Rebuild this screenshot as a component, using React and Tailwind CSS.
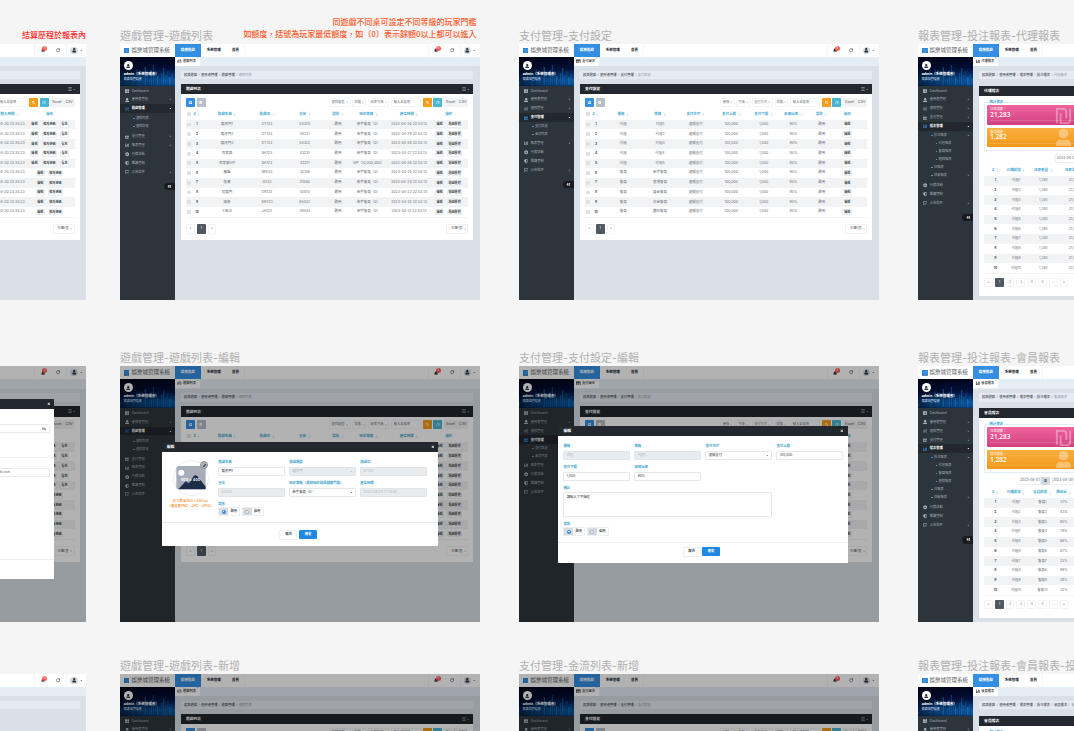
import React from "react";
import { FaBell, FaUser, FaChartBar, FaSearch, FaTrashAlt, FaCaretRight, FaCaretDown, FaThLarge, FaUserAlt, FaCog, FaShieldAlt, FaPlusSquare, FaAngleDoubleLeft, FaBars, FaSort, FaPen, FaTimes, FaRegCreditCard, FaEyeSlash, FaCalendarAlt, FaRegEnvelope } from "react-icons/fa";
import { RotateCw, Gamepad2 } from "lucide-react";

const TABLES = {
  game: {
    grid: "grid-cols-[6.5px_9px_51px_29px_46.5px_20px_41px_40px_39.3px]",
    heads: ["遊戲名稱", "遊戲ID", "桌台", "狀態", "玩家等級", "建立時間", "操作"],
    rows: [
      ["龍虎門1", "DT123", "54320", "啟用", "新手會員（0）", "2023-04-30 22:53:13"],
      ["龍虎門2", "DT123", "54321", "啟用", "新手會員（0）", "2023-04-29 22:53:13"],
      ["龍虎門3", "DT123", "54322", "啟用", "新手會員（0）", "2023-04-28 22:53:13"],
      ["百家樂", "BA123", "43210", "啟用", "新手會員（0）", "2023-04-27 22:53:13"],
      ["百家樂VIP", "BA123", "43211", "啟用", "VIP（10,000,000）", "2023-04-26 22:53:13"],
      ["輪盤", "NN123", "32109", "啟用", "新手會員（0）", "2023-04-25 22:53:13"],
      ["骰寶", "SI123", "21080", "啟用", "新手會員（0）", "2023-04-24 22:53:13"],
      ["射龍門", "DR123", "10870", "啟用", "新手會員（0）", "2023-04-23 22:53:13"],
      ["麻將", "MA123", "65432", "啟用", "新手會員（0）", "2023-04-22 22:53:13"],
      ["十點半", "JA123", "76543", "啟用", "新手會員（0）", "2023-04-21 22:53:13"],
    ],
    actions: () => ["編輯", "遊戲歷程"],
    filters: [["遊戲類型", "w-[22px]"], ["狀態", "w-[14px]"], ["玩家等級", "w-[21.3px]"]],
  },
  pay: {
    grid: "grid-cols-[6.5px_9px_11.5px_22.6px_50.8px_20.6px_50.6px_14.2px_45px_11.8px_39.4px]",
    gap: true,
    heads: ["層級", "等級", "支付方式", "支付上限", "支付下限", "反佣比率", "狀態", "操作"],
    rows: [
      ["代理", "代理1"], ["代理", "代理2"], ["代理", "代理3"], ["代理", "代理4"], ["代理", "代理5"],
      ["會員", "新手會員"], ["會員", "普通會員"], ["會員", "黃金會員"], ["會員", "白金會員"], ["會員", "鑽石會員"],
    ].map((r) => [...r, "虛擬支付", "100,000", "1,000", "95%", "啟用"]),
    actions: () => ["編輯"],
    filters: [["層級", "w-[14.3px]"], ["等級", "w-[13.5px]"], ["支付方式", "w-[21.3px]"], ["狀態", "w-[13.8px]"]],
  },
  account: {
    grid: "grid-cols-[6.5px_9px_51px_29px_46.5px_20px_34px_36px_50.3px]",
    heads: ["帳號", "名稱", "層級", "狀態", "登入IP", "最後登入時間", "操作"],
    rows: Array.from({ length: 10 }, (_, i) => ["agent" + (i + 1), "代理" + (i + 1), "代理", "啟用", "", "2023-04-30 23:35:23"]),
    actions: (i) => (i < 5 ? ["編輯", "修改密碼", "信息"] : ["編輯", "修改密碼"]),
    filters: [["層級", "w-[14.3px]"], ["狀態", "w-[14px]"]],
  },
};

const REPORTS = {
  agent: {
    grid: "grid-cols-[22.6px_18.8px_35.8px_25.6px_40px]",
    heads: ["#", "代理帳號", "注單數量", "注單金額", "輸贏"],
    row: (i) => [i, "代理" + i, "1,280", "21,000", "1,200"],
    offset: "pl-[71.3px]",
  },
  member: {
    grid: "grid-cols-[22.6px_18.8px_33.8px_9px_40px]",
    heads: ["#", "代理帳號", "會員帳號", "勝出比", "輸贏"],
    row: (i) => [i, "代理" + i, "會員" + i, ["57%", "43%", "80%", "79%", "86%", "67%", "23%", "69%", "29%", "33%"][i - 1], "1,200"],
    offset: "pl-[34.8px]",
  },
};

function Avatar({ className }) {
  return (
    <span className={"flex shrink-0 items-center justify-center overflow-hidden rounded-full " + className}>
      <FaUser className="size-[4.5px]" />
    </span>
  );
}

function TopBar() {
  return (
    <div className="flex h-[12.5px] shrink-0 items-center bg-white">
      <div className="flex h-full w-[55px] items-center gap-[2px] pl-[4px]">
        <svg viewBox="0 0 20 20" className="size-[5.8px] shrink-0">
          <rect width="20" height="20" rx="2" fill="#1c5f9f" />
          <path d="M1 1h18v12q-9 8-18 2z" fill="#3793e8" />
        </svg>
        <span className="whitespace-nowrap text-[5.5px] leading-none text-[#5a5e63]">娛樂城管理系統</span>
      </div>
      <div className="flex h-full w-[26px] items-center justify-center bg-[#348fe2] text-[3.5px] font-bold text-white">娛樂遊戲</div>
      <div className="flex h-full w-[26px] items-center justify-center text-[3.5px] font-bold text-[#22272c]">系統管理</div>
      <div className="flex h-full w-[18.5px] items-center justify-center border-r border-[#f6f7f9] text-[3.5px] font-bold text-[#22272c]">首頁</div>
      <div className="flex-1" />
      <div className="flex h-full w-[16px] items-center justify-center border-l border-[#f3f5f7]">
        <div className="relative">
          <FaBell className="size-[4.2px] text-[#2d353c]" />
          <span className="absolute -top-[2.4px] left-[1.7px] flex size-[4.6px] items-center justify-center rounded-full bg-[#ff5b57] text-[3px] leading-none text-white">5</span>
        </div>
      </div>
      <div className="flex h-full w-[15.8px] items-center justify-center text-[#3d454c]">
        <RotateCw strokeWidth={2.8} className="size-[4.4px]" />
      </div>
      <div className="flex h-full w-[20px] items-center gap-[1.8px] border-l border-[#f3f5f7] pl-[3.2px] text-[#2d353c]">
        <Avatar className="size-[7.6px] bg-[#d3dbe3]" />
        <FaCaretDown className="size-[2.6px]" />
      </div>
    </div>
  );
}

const BARS = [4, 6, 3, 7, 12, 9, 5, 11, 16, 13, 8, 10, 18, 12, 7, 15, 20, 14, 9, 6, 12, 17, 10, 14, 8, 11, 6];

function Profile() {
  return (
    <div className="relative h-[29.2px] shrink-0 overflow-hidden bg-[#020817]">
      <svg viewBox="0 0 55 29.2" preserveAspectRatio="none" className="absolute inset-0 h-full w-full">
        <defs>
          <linearGradient id="glow" x1="0" y1="0" x2="0" y2="1">
            <stop offset="0" stopColor="#02051c" />
            <stop offset="0.4" stopColor="#03103a" />
            <stop offset="0.8" stopColor="#0a4f96" />
            <stop offset="1" stopColor="#063a78" />
          </linearGradient>
          <linearGradient id="shade" x1="0" y1="0" x2="1" y2="0">
            <stop offset="0" stopColor="#00030f" stopOpacity="0.6" />
            <stop offset="0.5" stopColor="#00030f" stopOpacity="0.2" />
            <stop offset="1" stopColor="#00030f" stopOpacity="0" />
          </linearGradient>
        </defs>
        <rect width="55" height="29.2" fill="url(#glow)" />
        {BARS.map((h, i) => (
          <rect key={i} x={i * 2.05} y={28 - h} width="1.3" height={h} fill={i % 3 ? "#1670c0" : "#2ba0df"} opacity={i % 2 ? 0.35 : 0.5} />
        ))}
        <rect width="55" height="29.2" fill="url(#shade)" />
      </svg>
      <div className="relative flex flex-col pl-[4px] pt-[4.6px] text-white">
        <Avatar className="size-[9px] bg-white text-[#2d353c]" />
        <span className="mt-[1.8px] whitespace-nowrap text-[3.5px] font-bold leading-[4.5px]">admin（系統管理者）</span>
        <span className="whitespace-nowrap text-[3px] font-medium leading-[4.6px] text-[#bcd3ea]">娛樂城管理者</span>
      </div>
    </div>
  );
}

const MENU = [
  { id: "dash", label: "Dashboard", Icon: FaThLarge },
  { id: "user", label: "使用者管理", Icon: FaUserAlt, more: true },
  { id: "game", label: "遊戲管理", Icon: Gamepad2, more: true },
  { id: "pay", label: "支付管理", Icon: FaRegCreditCard, more: true },
  { id: "report", label: "報表管理", Icon: FaChartBar, more: true },
  { id: "promo", label: "行銷活動", Icon: FaCog },
  { id: "guard", label: "維護管制", Icon: FaShieldAlt },
  { id: "mail", label: "公告信件", Icon: FaRegEnvelope, more: true },
];

const SUBS = {
  game: { pad: "pt-[1.5px] pb-[1.3px]", items: [["遊戲列表", 0], ["遊戲設定", 0]] },
  pay: { pad: "pb-[0.6px]", items: [["支付設定", 0], ["金流列表", 0]] },
  user: { pad: "pb-[0.6px]", items: [["代理管理", 0], ["會員管理", 0]] },
  report: { pad: "pb-[1.3px]", items: [["投注報表", 0, true], ["代理報表", 1], ["會員報表", 1], ["遊戲報表", 1], ["日報表", 0], ["活動報表", 0, true]] },
};

function Sidebar({ active }) {
  return (
    <div className="flex w-[55px] shrink-0 flex-col bg-[#2d353c] text-[3.25px] text-[#a3abb2]">
      <Profile />
      <div className="pt-[0.6px]">
        {MENU.map(({ id, label, Icon, more }) => (
          <React.Fragment key={id}>
            <div className={"flex h-[8.95px] items-center pl-[5px] pr-[2.6px] " + (id === active ? "bg-[#22282e] font-bold text-white" : "")}>
              <Icon className={"size-[4.4px] shrink-0 " + (id === active ? "text-[#348fe2]" : "text-[#a9b1b8]")} />
              <span className="ml-[2.6px] flex-1 whitespace-nowrap">{label}</span>
              {more && (id === active ? <FaCaretDown className="size-[2.8px]" /> : <FaCaretRight className="size-[2.8px]" />)}
            </div>
            {id === active && (
              <div className={SUBS[id].pad}>
                {SUBS[id].items.map(([name, depth, open], i) => (
                  <div key={name} className={"flex h-[8.1px] items-center pr-[2.6px] " + (depth ? "pl-[18px]" : "pl-[13.5px]")}>
                    <span className={"mr-[1.3px] h-px w-[1.4px] " + (i === 0 ? "bg-[#348fe2]" : "bg-[#7f8a94]")} />
                    <span className="flex-1 whitespace-nowrap">{name}</span>
                    {open && (i === 0 ? <FaCaretDown className="size-[2.8px]" /> : <FaCaretRight className="size-[2.8px]" />)}
                  </div>
                ))}
              </div>
            )}
          </React.Fragment>
        ))}
      </div>
      <div className="mt-[6.2px] flex h-[7.3px] w-[10.6px] items-center self-end rounded-l-full bg-[#171b1f] pl-[3.4px] text-white">
        <FaAngleDoubleLeft className="size-[4.8px]" />
      </div>
    </div>
  );
}

function Pager({ pages }) {
  return (
    <div className="flex gap-[2px] text-[3.25px] text-[#6f7a85]">
      {["«", ...pages, "»"].map((p, i) => (
        <span key={i} className={"flex h-[9.3px] w-[8.8px] items-center justify-center rounded-[1px] " + (i === 1 ? "bg-[#505962] text-white" : "border border-[#f1f3f5] bg-white")}>{p}</span>
      ))}
    </div>
  );
}

function Head({ text, sort }) {
  return (
    <span className="flex items-center justify-center gap-[1.6px] whitespace-nowrap">
      {text}
      {sort && <FaSort className="size-[3px] shrink-0 text-[#c8d0d8]" />}
    </span>
  );
}

const Check = () => <span className="flex justify-center"><i className="size-[3.8px] rounded-[0.8px] bg-[#dee2e6]" /></span>;

function ListBody({ table }) {
  const t = TABLES[table];
  return (
    <div className="flex flex-col px-[5px] pb-[6.6px] pt-[3.3px]">
      <div className="flex h-[9.5px] gap-[1.7px] text-[3.25px]">
        <span className="flex w-[9px] items-center justify-center rounded-[0.7px] bg-[#348fe2] text-white"><FaPlusSquare className="size-[3.6px]" /></span>
        <span className="flex w-[9px] items-center justify-center rounded-[0.7px] bg-[#b6bec7] text-white"><FaTrashAlt className="size-[3.4px]" /></span>
        <span className="flex-1" />
        {t.filters.map(([f, w]) => (
          <span key={f} className={"flex items-center justify-center gap-[1px] whitespace-nowrap rounded-[1px] border border-[#f2f4f6] text-[#6c757d] " + w}>
            {f}<FaCaretDown className="size-[2.2px]" />
          </span>
        ))}
        <span className="flex w-[30.2px] items-center whitespace-nowrap rounded-[1px] border border-[#f2f4f6] pl-[1.6px] text-[#6c757d]">輸入並搜尋</span>
        <span className="flex w-[8.8px] items-center justify-center rounded-[0.7px] bg-[#f59c1a] text-white"><FaSearch className="size-[3px]" /></span>
        <span className="flex w-[9px] items-center justify-center rounded-[0.7px] bg-[#49b6d6] text-white"><RotateCw strokeWidth={3} className="size-[3.6px]" /></span>
        <span className="flex w-[24.3px] items-center justify-around rounded-[0.7px] bg-[#f2f3f4] text-[3.5px] text-[#4b5157]"><b className="font-normal">Excel</b><b className="font-normal">CSV</b></span>
      </div>
      <div className={"mt-[1.5px] grid h-[11px] items-center text-center text-[3.5px] font-bold text-[#4aabd2] " + t.grid}>
        <Check />
        <Head text="#" sort />
        {t.gap && <span />}
        {t.heads.map((h, i) => <Head key={h} text={h} sort={i < t.heads.length - 1} />)}
      </div>
      {t.rows.map((r, i) => (
        <div key={i} className={"grid h-[9.73px] items-center text-center text-[3.5px] text-[#6a7077] " + t.grid + (i % 2 ? "" : " bg-[#f2f3f5]")}>
          <Check />
          <b className="text-[3.25px] text-[#4b5157]">{i + 1}</b>
          {t.gap && <span />}
          {r.map((c, k) => <span key={k} className="flex justify-center whitespace-nowrap">{c}</span>)}
          <span className="flex items-center justify-center gap-[2.4px]">
            {t.actions(i).map((a) => (
              <b key={a} className="flex h-[6.6px] shrink-0 items-center whitespace-nowrap rounded-[1px] border border-[#eceff1] bg-white px-[0.7px] text-[3.1px] text-[#40464c]">{a}</b>
            ))}
          </span>
        </div>
      ))}
      <div className="flex justify-between border-t border-[#f1f3f5] pt-[6.4px]">
        <Pager pages={["1"]} />
        <span className="flex h-[9.3px] w-[22px] items-center justify-end gap-[1.2px] whitespace-nowrap rounded-[1px] border border-[#f0f2f4] pr-[1.6px] text-[3.4px] text-[#5d646b]">10筆/頁<FaCaretDown className="size-[2.2px]" /></span>
      </div>
    </div>
  );
}

function Stat({ label, value, className, children }) {
  return (
    <div className={"relative flex h-[19.7px] w-[92px] flex-col overflow-hidden rounded-[1px] pl-[3px] pt-[2.4px] text-white " + className}>
      <span className="text-[3.2px] font-medium leading-[4.4px] text-white/85">{label}</span>
      <span className="font-['Open_Sans',sans-serif] text-[6.4px] font-semibold leading-[6.8px]">{value}</span>
      <svg viewBox="0 0 20 20" className="absolute bottom-0 right-[6px] size-[19px] text-white/35">{children}</svg>
      <span className="mt-[1.6px] h-px w-[84px] bg-white/15" />
    </div>
  );
}

function ReportBody({ kind }) {
  const r = REPORTS[kind];
  return (
    <div className="flex flex-col px-[5px] pb-[9px] pt-[3.8px]">
      <fieldset className="flex flex-col rounded-[1px] border border-[#e4ecf3] px-[2.2px] pb-[2.8px]">
        <legend className="ml-[1.5px] h-[5px] px-[0.6px] text-[3.4px] font-bold leading-[5px] text-[#3fa5cf]">統計資訊</legend>
        <Stat label="注單總數：" value="21,283" className="bg-linear-to-b from-[#f0649e] to-[#d23f80]">
          <path d="M3 18V3h7q3 0 3 3v7M7 8v10h7q3 0 3-3V3" fill="none" stroke="currentColor" strokeWidth="2" />
        </Stat>
        <div className="h-[3px]" />
        <Stat label="投注總量：" value="1,282" className="bg-linear-to-b from-[#fab040] to-[#f29716]">
          <circle cx="10" cy="6" r="5" fill="currentColor" />
          <path d="M2 19q0-7 5-7 3 2 6 0 5 0 5 7z" fill="currentColor" />
        </Stat>
      </fieldset>
      <div className={"mt-[3.4px] flex h-[8.6px] text-[3.4px] text-[#555c63] " + r.offset}>
        <span className="flex w-[22px] items-center justify-center whitespace-nowrap rounded-[1px] border border-[#edeff1]">2023-04-01</span>
        <span className="flex w-[9px] items-center justify-center bg-[#d2dae2] text-[#4b5157]"><FaCalendarAlt className="size-[3px]" /></span>
        <span className="ml-[2px] flex w-[22px] items-center justify-center whitespace-nowrap rounded-[1px] border border-[#edeff1]">2023-04-30</span>
      </div>
      <div className={"mt-[2.8px] grid h-[10px] items-center text-[3.5px] font-bold text-[#4aabd2] " + r.grid}>
        {r.heads.map((h) => <Head key={h} text={h} sort />)}
      </div>
      {Array.from({ length: 10 }, (_, i) => (
        <div key={i} className={"grid h-[9.73px] items-center text-center text-[3.4px] text-[#6a7077] " + r.grid + (i % 2 ? "" : " bg-[#f2f3f5]")}>
          {r.row(i + 1).map((c, k) => <span key={k} className={"flex justify-center whitespace-nowrap " + (k ? "" : "font-bold text-[#4b5157]")}>{c}</span>)}
        </div>
      ))}
      <div className="flex border-t border-[#f1f3f5] pt-[3.6px]">
        <Pager pages={["1", "2", "3", "4", "5", "..."]} />
      </div>
    </div>
  );
}

function Frame({ className, active, title, crumbs, TabIcon, table, report, dim, children }) {
  return (
    <div className={"absolute flex h-[256px] w-[360px] flex-col overflow-hidden bg-[#d9e0e7] " + className}>
      <TopBar />
      <div className="flex min-h-0 flex-1">
        <Sidebar active={active} />
        <div className="min-w-0 flex-1">
          <div className="h-[9.7px] bg-[#e5edf5]">
            <div className="flex h-[9.2px] w-[25.2px] items-center gap-[1px] bg-white pl-[2.8px] text-[3.25px] font-medium text-[#22272c]">
              <TabIcon className="size-[4.6px] shrink-0" />
              <span className="whitespace-nowrap">{title}</span>
              <FaTimes className="mb-[6px] size-[1.6px] shrink-0 text-[#666]" />
            </div>
          </div>
          <div className="px-[6.3px] pt-[4.6px]">
            <div className="flex h-[8.5px] items-center gap-[1.4px] whitespace-nowrap rounded-[1px] bg-[#e6eaf3] pl-[2.9px] text-[3.3px] font-medium text-[#4b5157]">
              {crumbs.map((c) => <React.Fragment key={c}><span>{c}</span><span className="text-[#8a939b]">/</span></React.Fragment>)}
              <span className="font-normal text-[#9299a1]">{title}</span>
            </div>
            {(table || report) && (
              <div className={"bg-white " + (report ? "mt-[6.4px]" : "mt-[4.7px]")}>
                <div className="flex h-[10.2px] items-center justify-between bg-[#22282e] pl-[5px] pr-[4px] text-white">
                  <span className="text-[3.8px] font-bold">{title}</span>
                  {!report && <span className="flex items-center gap-[1px] text-[#b5bbc0]"><FaBars className="size-[4px]" /><FaCaretDown className="size-[2.6px]" /></span>}
                </div>
                {report ? <ReportBody kind={report} /> : <ListBody table={table} />}
              </div>
            )}
          </div>
        </div>
      </div>
      {dim && <div className="absolute inset-0 bg-black/30" />}
      {children}
    </div>
  );
}

function Modal({ className, title, children }) {
  return (
    <div className={"absolute flex flex-col bg-white " + className}>
      <div className="flex h-[10.2px] shrink-0 items-center justify-between bg-[#22282e] pl-[5px] pr-[3.6px] text-white">
        <span className="text-[3.8px] font-bold">{title}</span>
        <FaTimes className="size-[3.6px]" />
      </div>
      {children}
    </div>
  );
}

function Field({ label, value, off, select }) {
  return (
    <div className="w-[66.5px]">
      <div className="h-[6.7px] whitespace-nowrap text-[3.4px] font-bold leading-[5px] text-[#3fa5cf]">{label}</div>
      <div className={"flex h-[9px] items-center justify-between whitespace-nowrap rounded-[1px] border px-[2.4px] text-[3.3px] " + (off ? "border-[#e1e5e9] bg-[#e9ecef] text-[#adb5bd]" : "border-[#e4e8eb] bg-white text-[#343a40]")}>
        {value}
        {select && <FaCaretDown className="size-[2.6px]" />}
      </div>
    </div>
  );
}

function Radios() {
  return (
    <div>
      <div className="h-[5.2px] text-[3.4px] font-bold leading-[4px] text-[#3fa5cf]">狀態</div>
      <div className="flex gap-[1.4px] text-[3.3px] font-medium text-[#343a40]">
        {["啟用", "停用"].map((t, i) => (
          <div key={t} className="flex h-[9px] w-[22px] items-center border border-[#edf0f2]">
            <span className="flex h-full w-[9px] items-center justify-center bg-[#d5dbe1]">
              <i className={"flex size-[4px] items-center justify-center rounded-full " + (i ? "border border-[#aab2ba] bg-white" : "bg-[#348fe2]")}>
                {!i && <i className="size-[1.4px] rounded-full bg-white" />}
              </i>
            </span>
            <span className="flex-1 text-center">{t}</span>
          </div>
        ))}
      </div>
    </div>
  );
}

function Footer({ className }) {
  return (
    <div className={"flex flex-1 items-center justify-center gap-[1.6px] border-t border-[#e9ecef] text-[3.3px] font-bold " + className}>
      <span className="flex h-[9.4px] w-[18px] items-center justify-center rounded-[1px] border border-[#eceef0] text-[#343a40]">取消</span>
      <span className="flex h-[9px] w-[17.8px] items-center justify-center rounded-[1px] bg-[#1f88e5] text-white">確定</span>
    </div>
  );
}

function GameModal() {
  return (
    <Modal title="編輯" className="left-[42px] top-[75.7px] h-[104.3px] w-[276px]">
      <div className="flex h-[70.2px] shrink-0 pt-[7.6px]">
        <div className="flex w-[56.5px] shrink-0 flex-col items-center">
          <div className="relative ml-[1.4px]">
            <svg viewBox="0 0 108 108" className="size-[36px]">
              <circle cx="54" cy="54" r="52" fill="#fff" stroke="#dfe2e6" strokeWidth="2" />
              <rect x="10" y="18" width="88" height="70" rx="8" fill="#a6acba" />
              <circle cx="25" cy="38" r="9" fill="#fff" />
              <path d="M16 88 38 64 48 70 62 48Q70 42 76 52L98 80V88z" fill="#1e2d48" />
            </svg>
            <span className="absolute inset-x-0 top-[17px] whitespace-nowrap text-center text-[3.8px] font-semibold leading-[5px] text-white">900 x 400</span>
            <span className="absolute right-[0.5px] top-[1.6px] flex size-[8px] items-center justify-center rounded-full border border-[#8c949c] bg-[#a9b0b7] text-[#343a40]"><FaPen className="size-[3.2px]" /></span>
          </div>
          <div className="ml-[1px] mt-[3.6px] whitespace-nowrap text-center text-[3.4px] font-medium leading-[4.8px] text-[#f58a1a]">
            尺寸限定900 x 400 px<br />（僅支援PNG、JPG、JPEG）
          </div>
        </div>
        <div className="flex w-[213px] shrink-0 flex-wrap content-start gap-x-[4.5px] gap-y-[5.3px]">
          <Field label="遊戲名稱" value="龍虎門1" />
          <Field label="遊戲類型" value="龍虎門" off select />
          <Field label="遊戲ID" value="DT123" off />
          <Field label="桌台" value="54320" off />
          <Field label="玩家等級（限制玩家最低額度門檻）" value="新手會員（0）" select />
          <Field label="建立時間" value="2023-04-24 17:53:08" off />
          <Radios />
        </div>
      </div>
      <Footer className="pr-[3px]" />
    </Modal>
  );
}

function PayModal() {
  return (
    <Modal title="編輯" className="left-[39.7px] top-[59.7px] h-[137px] w-[289.3px]">
      <div className="flex h-[106.1px] shrink-0 flex-wrap content-start gap-x-[4.5px] gap-y-[5.3px] pl-[5px] pt-[7.6px]">
        <Field label="層級" value="代理" off />
        <Field label="等級" value="代理1" off />
        <Field label="支付方式" value="虛擬支付" select />
        <Field label="支付上限" value="100,000" />
        <Field label="支付下限" value="1,000" />
        <Field label="反佣比率" value="95%" />
        <div className="w-[284px]">
          <div className="h-[6.2px] text-[3.4px] font-bold leading-[4.4px] text-[#3fa5cf]">備註</div>
          <div className="h-[24.7px] w-[208.5px] rounded-[1px] border border-[#e4e8eb] px-[2.4px] pt-[1.6px] text-[3.3px] text-[#343a40]">請輸入文字描述</div>
        </div>
        <Radios />
      </div>
      <Footer className="pb-[2.6px] pr-[3.6px]" />
    </Modal>
  );
}

function AccountModal() {
  const box = "mx-[4.7px] flex h-[9px] items-center rounded-[1px] border border-[#e8ebee] px-[2.4px] text-[3.3px] text-[#555c63] ";
  return (
    <Modal title="編輯" className="left-[32px] top-[32.3px] h-[180.6px] w-[296.3px]">
      <div className="h-[49.3px] border-b border-[#eceef0] pt-[15.2px]"><div className={box + "justify-end"}><FaEyeSlash className="size-[4px]" /></div></div>
      <div className="h-[101px] pt-[9.6px]"><div className={box + "justify-end pr-[38.5px]"}>agent001@gmail.com</div></div>
      <div className="border-t border-[#eceef0]" />
    </Modal>
  );
}

function Label({ className, children }) {
  return <div className={"absolute whitespace-nowrap text-[11px] leading-[14px] text-[#b0b0b0] " + className}>{children}</div>;
}

const G = { active: "game", title: "遊戲列表", table: "game", TabIcon: Gamepad2, crumbs: ["娛樂遊戲", "使用者管理", "遊戲管理"] };
const P = { active: "pay", title: "支付設定", table: "pay", TabIcon: FaRegCreditCard, crumbs: ["娛樂遊戲", "使用者管理", "支付管理"] };
const A = { active: "user", title: "代理列表", table: "account", TabIcon: FaUserAlt, crumbs: ["娛樂遊戲", "使用者管理", "代理管理"] };
const R = { active: "report", TabIcon: FaChartBar, crumbs: ["娛樂遊戲", "使用者管理", "報表管理", "投注報表"] };

export default function App() {
  return (
    <div className="relative h-[731px] w-[1074px] overflow-hidden bg-[#f5f5f5] font-['Inter','Noto_Sans_CJK_TC',sans-serif]">
      <div className="absolute right-[988px] top-[29px] whitespace-nowrap text-[8px] font-medium leading-[12px] text-[#ff2a2a]">結算歷程於報表內</div>
      <div className="absolute right-[597.5px] top-[15.5px] whitespace-nowrap text-right font-['Noto_Sans_CJK_TC',sans-serif] text-[8px] font-medium leading-[12px] text-[#ff5a2a]">
        同遊戲不同桌可設定不同等級的玩家門檻<br />如額度，括號為玩家最低額度，如（0）表示餘額0以上都可以進入
      </div>

      <Label className="left-[120px] top-[29px]">遊戲管理-遊戲列表</Label>
      <Label className="left-[519px] top-[29px]">支付管理-支付設定</Label>
      <Label className="left-[918px] top-[29px]">報表管理-投注報表-代理報表</Label>
      <Frame {...A} className="-left-[274px] top-[44.2px]" />
      <Frame {...G} className="left-[119.7px] top-[44.2px]" />
      <Frame {...P} className="left-[518.7px] top-[44.2px]" />
      <Frame {...R} title="代理報表" report="agent" className="left-[917.8px] top-[44.2px]" />

      <Label className="left-[120px] top-[351px]">遊戲管理-遊戲列表-編輯</Label>
      <Label className="left-[519px] top-[351px]">支付管理-支付設定-編輯</Label>
      <Label className="left-[918px] top-[351px]">報表管理-投注報表-會員報表</Label>
      <Frame {...A} dim className="-left-[274px] top-[366.4px]"><AccountModal /></Frame>
      <Frame {...G} dim className="left-[119.7px] top-[366.4px]"><GameModal /></Frame>
      <Frame {...P} dim className="left-[518.7px] top-[366.4px]"><PayModal /></Frame>
      <Frame {...R} title="會員報表" report="member" className="left-[917.8px] top-[366.4px]" />

      <Label className="left-[120px] top-[659px]">遊戲管理-遊戲列表-新增</Label>
      <Label className="left-[519px] top-[659px]">支付管理-金流列表-新增</Label>
      <Label className="left-[918px] top-[659px]">報表管理-投注報表-會員報表-投注明細</Label>
      <Frame {...A} table={null} className="-left-[274px] top-[674.2px]" />
      <Frame {...G} dim className="left-[119.7px] top-[674.2px]" />
      <Frame {...P} dim className="left-[518.7px] top-[674.2px]" />
      <Frame {...R} crumbs={["娛樂遊戲", "使用者管理", "報表管理", "投注報表", "會員報表"]} title="會員報表" report="member" className="left-[917.8px] top-[674.2px]" />
    </div>
  );
}
